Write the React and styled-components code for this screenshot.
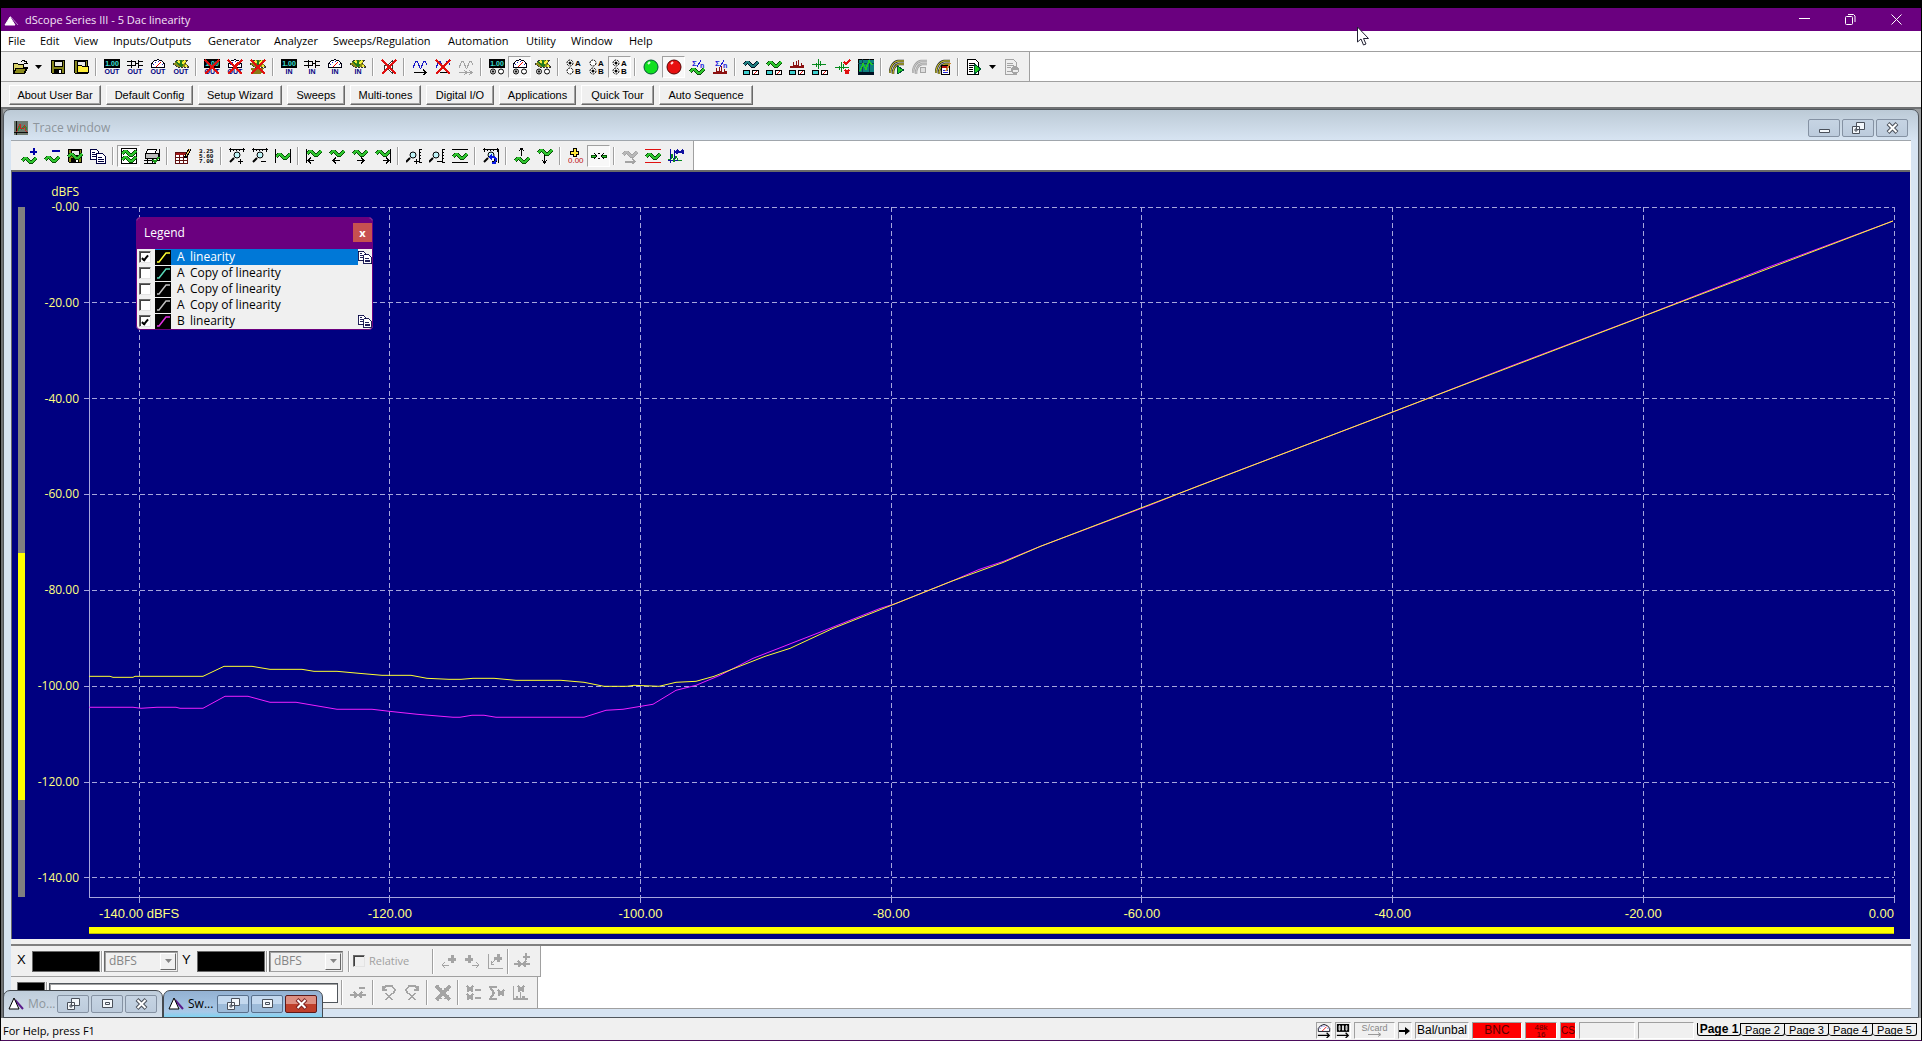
import React from "react";
import styled, { createGlobalStyle, css } from "styled-components";

const ui = '"Open Sans", "Noto Sans", sans-serif';
const sans = '"Liberation Sans", Arial, sans-serif';
const face = "#f0f0f0";
const purple = "#6a007f";

const Global = createGlobalStyle`
  *, *::before, *::after { box-sizing: border-box; }
  body { margin: 0; background: #000; font: 11px/16px ${ui}; color: #000; }
  button, input, select { font: inherit; color: inherit; margin: 0; padding: 0; border-radius: 0; }
  h1, h2 { margin: 0; font: inherit; }
  svg { display: block; flex: none; }
`;

/* ---------- Frame ---------- */
const Frame = styled.div`
  position: relative;
  display: flex;
  flex-direction: column;
  min-height: 100vh;
  border: solid #000;
  border-width: 8px 1px 0;
  border-bottom: 1px solid #4b0c5c;
  background: ${face};
`;
const TitleBar = styled.header`
  display: flex;
  align-items: center;
  height: 23px;
  padding: 0 2px;
  background: ${purple};
  color: #f4e4f6;
`;
const AppTitle = styled.h1`
  flex: 1;
  padding-left: 6px;
  font-size: 11px;
  line-height: 22px;
`;
const CaptionButton = styled.button`
  display: grid;
  place-items: center;
  width: 46px;
  height: 22px;
  border: 0;
  background: transparent;
  color: #fff;
`;
const MenuBar = styled.nav`
  display: flex;
  gap: 14px;
  height: 20px;
  padding-left: 7px;
  background: #fff;
  line-height: 20px;
`;
const MenuItem = styled.button`
  width: ${(p) => p.$w}px;
  border: 0;
  background: none;
  text-align: left;
  white-space: nowrap;
`;

/* ---------- Toolbars ---------- */
const ToolRow = styled.div`
  display: flex;
  background: #fff;
  border-top: ${(p) => (p.$ruled ? "1px solid #a0a0a0" : "0")};
`;
const Tools = styled.div`
  display: flex;
  align-items: center;
  height: 29px;
  padding: 0 6px 0 ${(p) => p.$start || 7}px;
  background: ${face};
  border-right: 1px solid #a0a0a0;
`;
const Tool = styled.button`
  display: grid;
  place-items: center;
  width: 23px;
  height: 22px;
  border: 1px solid transparent;
  background: none;
  ${(p) =>
    p.$pressed &&
    css`
      border-color: #a0a0a0 #fff #fff #a0a0a0;
      background: #f8f8f8;
    `}
`;
const Drop = styled.button`
  display: grid;
  place-items: center;
  width: 15px;
  height: 22px;
  border: 0;
  background: none;
`;
const Sep = styled.span`
  flex: none;
  width: 2px;
  height: ${(p) => p.$h || 18}px;
  margin: 0 ${(p) => p.$m || 3}px;
  border-left: 1px solid #a0a0a0;
  background: #fff;
`;
const UserBar = styled.div`
  display: flex;
  align-items: center;
  gap: 5px;
  height: 26px;
  padding: 1px 0 0 8px;
  border-top: 1px solid #a0a0a0;
  font-family: ${sans};
`;
const UserButton = styled.button`
  width: ${(p) => p.$w}px;
  height: 20px;
  border: 1px solid;
  border-color: #fff #696969 #696969 #fff;
  box-shadow: inset -1px -1px #a0a0a0;
  background: ${face};
  white-space: nowrap;
`;

/* ---------- Document windows ---------- */
const Workspace = styled.main`
  position: relative;
  flex: 1;
  display: flex;
  padding: 0 2px 0 0;
  border: solid #707274;
  border-width: 2px 0 0 2px;
  background: #9a9d9f;
`;
const DocWindow = styled.section`
  flex: 1;
  display: flex;
  flex-direction: column;
  min-width: 0;
  padding: 0 7px 8px;
  border: 1px solid #50565c;
  border-radius: 7px 7px 0 0;
  background: linear-gradient(#bccad6, #d7e4f2 30px);
`;
const DocTitle = styled.div`
  display: flex;
  align-items: center;
  gap: 2px;
  height: 30px;
  padding: 6px 3px 0 3px;
  color: #8d959c;
`;
const DocName = styled.h2`
  flex: 1;
  padding-left: 3px;
  font-size: 12px;
`;
const GlassButton = styled.button`
  display: grid;
  place-items: center;
  width: 32px;
  height: 18px;
  border: 1px solid #8592a3;
  border-radius: 2px;
  background: linear-gradient(#c6d4e3, #bccbdc);
  color: #454b55;
  ${(p) =>
    p.$active &&
    css`
      border-color: #58708c;
      background: linear-gradient(#c3d8ee 50%, #9dbbd9 50%);
    `}
  ${(p) =>
    p.$danger &&
    css`
      border-color: #5c1a1a;
      background: linear-gradient(#dd8f82 50%, #bf3f2b 50%);
    `}
`;
const Pane = styled.div`
  flex: 1;
  display: flex;
  flex-direction: column;
  border-top: 1px solid #a0a6ac;
  background: ${face};
`;

/* ---------- Plot ---------- */
const Canvas = styled.div`
  position: relative;
  flex: 1;
  display: grid;
  grid-template-columns: 18px 59px 1fr 16px;
  grid-template-rows: 35px 1fr 42px;
  min-height: 300px;
  margin-right: 1px;
  border: solid #696969;
  border-width: 2px 0 0 1px;
  background: #000080;
  color: #ffff80;
`;
const Unit = styled.div`
  grid-area: 1 / 2;
  align-self: end;
  padding: 0 10px 7px 0;
  text-align: right;
  font-size: 12px;
`;
const RangeY = styled.div`
  grid-area: 2 / 1;
  display: flex;
  flex-direction: column;
  width: 7px;
  margin-left: 6px;
  background: #808080;
`;
const RangeSpace = styled.span`
  flex: ${(p) => p.$part};
`;
const RangeThumb = styled.span`
  flex: ${(p) => p.$part};
  background: #ff0;
`;
const YTicks = styled.div`
  grid-area: 2 / 2;
  display: flex;
  flex-direction: column;
  justify-content: space-between;
  height: calc(100% * 140 / 144);
  padding-right: 10px;
  font-size: 12px;
`;
const YTick = styled.span`
  display: flex;
  align-items: center;
  justify-content: flex-end;
  height: 0;
`;
const Plot = styled.svg`
  grid-area: 2 / 3;
  width: 100%;
  height: 100%;
  overflow: visible;
`;
const XAxis = styled.div`
  grid-area: 3 / 3;
  display: flex;
  flex-direction: column;
  gap: 5px;
  padding-top: 9px;
`;
const XTicks = styled.div`
  display: flex;
  justify-content: space-between;
  padding-left: calc(100% * 4 / 144);
  font: 13px/16px ${sans};
`;
const XTick = styled.span`
  display: flex;
  justify-content: ${(p) => (p.$last ? "flex-end" : "center")};
  width: 0;
  white-space: nowrap;
`;
const RangeX = styled.div`
  height: 7px;
  background: #ff0;
  border-bottom: 1px solid #c0c000;
`;

/* ---------- Legend ---------- */
const Legend = styled.section`
  position: absolute;
  top: 45px;
  left: 124px;
  width: 237px;
  border: 1px solid ${purple};
  border-radius: 4px;
  background: ${face};
  color: #000;
  overflow: hidden;
`;
const LegendTitle = styled.div`
  display: flex;
  align-items: center;
  justify-content: space-between;
  height: 31px;
  padding: 0 0 2px 7px;
  background: ${purple};
  color: #fff;
  font-size: 12px;
`;
const LegendClose = styled.button`
  width: 19px;
  height: 19px;
  border: 0;
  background: #c75050;
  color: #fff;
  font: bold 11px/14px ${ui};
`;
const LegendRow = styled.label`
  display: flex;
  align-items: center;
  height: 16px;
  padding-left: 2px;
`;
const Box = styled.input`
  appearance: none;
  flex: none;
  display: grid;
  place-items: center;
  width: 12px;
  height: 12px;
  margin-right: 4px;
  border: 1px solid;
  border-color: #696969 #e3e3e3 #e3e3e3 #696969;
  box-shadow: inset 1px 1px #404040;
  background: ${(p) => (p.disabled ? face : "#fff")};
  &:checked::after {
    content: "";
    width: 4px;
    height: 7px;
    border: solid #000;
    border-width: 0 2px 2px 0;
    transform: rotate(40deg);
  }
`;
const LegendName = styled.span`
  flex: 1;
  display: flex;
  align-items: center;
  height: 16px;
  background: ${(p) => (p.$selected ? "#0078d7" : "none")};
  color: ${(p) => (p.$selected ? "#fff" : "#000")};
  font-size: 12px;
  white-space: nowrap;
`;
const Channel = styled.span`
  width: 13px;
  margin-left: 6px;
`;

/* ---------- Cursor bars ---------- */
const CursorBars = styled.div`
  margin-top: 5px;
  border-top: 2px solid #808080;
  border-bottom: 1px solid #a0a0a0;
  background: #fff;
`;
const CursorBar = styled.div`
  display: flex;
  align-items: center;
  width: ${(p) => p.$w}px;
  height: 31px;
  padding-left: 6px;
  border: solid #a0a0a0;
  border-width: 0 1px ${(p) => (p.$ruled ? 1 : 0)}px 0;
  background: ${face};
`;
const AxisName = styled.label`
  width: 15px;
  padding-bottom: 2px;
  font: 13px/16px ${sans};
`;
const Readout = styled.output`
  width: ${(p) => p.$w}px;
  height: 21px;
  border: 1px solid #696969;
  background: #000;
`;
const Combo = styled.span`
  display: flex;
  align-items: center;
  width: 74px;
  height: 21px;
  margin-right: ${(p) => p.$after}px;
  padding: 1px;
  border: 1px solid;
  border-color: #696969 #a0a0a0 #a0a0a0 #696969;
  box-shadow: inset 1px 1px #a0a0a0;
  color: #858585;
`;
const ComboSelect = styled.select`
  appearance: none;
  flex: 1;
  min-width: 0;
  padding-left: 3px;
  border: 0;
  background: none;
  opacity: 1;
  font-size: 12px;
`;
const ComboArrow = styled.span`
  display: grid;
  place-items: center;
  width: 16px;
  height: 17px;
  border: 1px solid;
  border-color: #fff #696969 #696969 #fff;
  background: ${face};
`;
const Relative = styled.label`
  display: flex;
  align-items: center;
  width: 76px;
  color: #a0a0a0;
  font-size: 11px;
`;
const Expression = styled.input`
  width: 289px;
  height: 20px;
  border: 1px solid #50565c;
  box-shadow: inset 1px 1px #a0a0a0;
  background: #fff;
`;

/* ---------- Minimised windows ---------- */
const Dock = styled.div`
  position: absolute;
  left: 0;
  bottom: 0;
  display: flex;
`;
const MinWindow = styled.div`
  display: flex;
  align-items: center;
  gap: 2px;
  width: 160px;
  height: 28px;
  padding: 0 5px 0 4px;
  border: 1px solid #454a50;
  border-radius: 7px 7px 0 0;
  background: ${(p) => (p.$active ? "linear-gradient(#93b1d2, #a9c9e8 80%, #7fd3f2)" : "linear-gradient(#bfcddb, #d3deea)")};
  color: ${(p) => (p.$active ? "#000" : "#8d959c")};
`;
const MinName = styled.span`
  flex: 1;
  padding-left: 2px;
  font-size: 12px;
`;

/* ---------- Status bar ---------- */
const StatusBar = styled.footer`
  display: flex;
  align-items: center;
  gap: 3px;
  height: 22px;
  padding: 3px 4px 0 2px;
  background: ${face};
  font-family: ${sans};
`;
const Help = styled.span`
  flex: 1;
  font: 11px/16px ${ui};
`;
const Cell = styled.span`
  display: grid;
  place-items: center;
  align-content: center;
  width: ${(p) => p.$w}px;
  height: 17px;
  border: 1px solid;
  border-color: #a0a0a0 #fff #fff #a0a0a0;
  background: ${(p) => (p.$alert ? "#f00" : face)};
  color: ${(p) => (p.$dim ? "#858585" : p.$alert ? "#5a0000" : "#000")};
  font-size: ${(p) => p.$size || 12}px;
  line-height: ${(p) => (p.$size ? p.$size - 1 : 15)}px;
  text-align: center;
  white-space: ${(p) => (p.$stack ? "pre" : "nowrap")};
`;
const Pages = styled.div`
  display: flex;
  align-items: flex-start;
  height: 15px;
`;
const Page = styled.button`
  width: 44px;
  height: 13px;
  border: solid #000;
  border-width: ${(p) => (p.$on ? "0 1px 1px 1px" : "1px 1px 1px 0")};
  border-radius: 0 0 3px 3px;
  background: ${face};
  font: ${(p) => (p.$on ? "bold 12px/11px" : "11px/10px")} ${sans};
  white-space: nowrap;
`;

/* ---------- Icon parts ---------- */
const G = "#2fc42f";
const Wave = ({ y = 8, c = G, o = "#064d06" }) => {
  const d = `M1 ${y + 3}L4 ${y}H5L9 ${y + 4}H11L15 ${y}`;
  return (
    <g fill="none">
      <path d={d} stroke={o} strokeWidth="3" />
      <path d={d} stroke={c} strokeWidth="1.5" />
    </g>
  );
};
const Line = ({ d, c = "#000", w = 1, f = "none" }) => <path d={d} stroke={c} strokeWidth={w} fill={f} />;
const Tag = ({ t, c = "#000080", y = 15 }) => (
  <text x="8" y={y} fontSize="7" fontWeight="bold" fontFamily="Liberation Sans, sans-serif" textAnchor="middle" fill={c}>{t}</text>
);
const Lcd = () => (
  <g>
    <path d="M0 0h16v9H0z" />
    <text x="8" y="7" fontSize="7" fontWeight="bold" fontFamily="Liberation Sans, sans-serif" textAnchor="middle" fill="#3fe0d8">1.00</text>
  </g>
);
const Plug = () => <Line d="M0 2.500h4M0 6.500h4M4.500 .5v8M4.500 2.500h4v4h-4M11.500 .5v8M9 4.500h2M12 2.500h4M12 6.500h4" />;
const Meter = () => (
  <g>
    <path d="M1.500 8.500V5L4 2L8 .5L12 2L14.500 5v3.500z" fill="#fff" stroke="#001" />
    <Line d="M3 5h1M5 3h1M8 2v1M12 5h1" c="#22c" />
    <Line d="M6 8l5-5" c="#e00" />
  </g>
);
const Fish = () => (
  <g>
    <path d="M0 5l4-4h11l-3 3 4 4H4z" fill="#8a8a18" stroke="#333" strokeDasharray="2 1" />
    <Line d="M3 3l4 3M8 1v7M11 1l-2 6" c="#1d7a1d" w={1.5} />
    <Line d="M5 2l2 2M12 2l-3 3M12 7h2" c="#f6f03a" w={1.5} />
  </g>
);
const Cross = ({ c = "#e01010" }) => <Line d="M1 1l14 14M15 1L1 15" c={c} w={2} />;
const Radios = ({ on = 1 }) => (
  <g fill="#fff" stroke="#000" shapeRendering="auto">
    <circle cx="4" cy="12.500" r="2.500" />
    <circle cx="12" cy="12.500" r="2.500" />
    <circle cx={on ? 4 : 12} cy="12.500" r=".8" fill="#000" />
  </g>
);
const AB = ({ a, b }) => (
  <g shapeRendering="auto">
    <circle cx="4" cy="4" r="3" fill="#fff" stroke="#000" strokeDasharray="2 1" />
    <circle cx="4" cy="12" r="3" fill="#fff" stroke="#000" strokeDasharray="2 1" />
    {a && <circle cx="4" cy="4" r="1.500" />}
    {b && <circle cx="4" cy="12" r="1.500" />}
    <g fontSize="8" fontWeight="bold" fontFamily="Liberation Sans, sans-serif">
      <text x="9" y="7">A</text>
      <text x="9" y="15">B</text>
    </g>
  </g>
);
const Pads = () => (
  <g>
    <path d="M.5 11.500h6v4h-6z" fill="#3fd0d0" stroke="#000" />
    <path d="M9.500 11.500h6v4h-6z" fill="#fff" stroke="#000" />
    <Line d="M11 15l3-3" c="#e01010" />
  </g>
);
const Bars = ({ y = 9 }) => <path d={`M1 ${y}h14V${y - 3}h-2V${y - 5}h-1v3h-2V${y - 8}H9v5H8V${y - 7}H7v4H5V${y - 6}H4v4H1z`} fill="#8b1010" />;
const Spike = ({ y = 6 }) => <Line d={`M0 ${y}.500h4v-2v4v-2h2V${y - 5}V${y + 5}v-5h2v-3v5v-2h6`} c="#078a1e" />;
const SigmaN = () => (
  <g fontFamily="Liberation Sans, sans-serif" fill="#1616d8" fontWeight="bold">
    <text x="3" y="7" fontSize="8">Σ</text>
    <text x="11" y="9" fontSize="7">n</text>
    <path d="M8 8l4-7" stroke="#1616d8" />
  </g>
);
const Floppy = ({ fill = "#84841c" }) => (
  <g>
    <path d="M1.500 1.500h13v13h-12l-1-1z" fill={fill} stroke="#000" />
    <path d="M4 2h8v5H4z" fill="#e9e9e9" stroke="#000" />
    <path d="M4 10h8v5H4z" />
    <path d="M9 11h2v3H9z" fill="#fff" />
  </g>
);
const Lens = ({ x = 0, s = "+" }) => (
  <g shapeRendering="auto">
    <circle cx={8 + x} cy="7" r="3" fill="#bff4f8" stroke="#000" />
    <Line d={`M${5 + x} 10l-4 4`} w={2} />
    <Line d={`M${9 + x} 13.500h5${s === "+" ? `M${11 + x}.500 11v5` : ""}`} />
  </g>
);
const RulerTop = () => <Line d="M0 1.500h16M1.500 0v4M4.500 1v2M7.500 1v2M10.500 1v2M14.500 0v4" />;
const RulerSide = () => <Line d="M13.500 1v14M13 1.500h3M13 4.500h2M13 7.500h2M13 10.500h2M13 14.500h3" />;
const Sheets = () => (
  <g fill="#fff" stroke="#000040">
    <path d="M.5 1.500h6l2 2v8h-8z" />
    <path d="M6.500 5.500h6l3 3v7h-9z" />
    <path d="M2 4.500h3M2 6.500h4M2 8.500h4M8 9.500h4M8 11.500h6M8 13.500h6" />
  </g>
);
const Curve = ({ c = "#e6de20", o = "#333" }) => (
  <g fill="none" shapeRendering="auto">
    <path d="M1 14c0-6 3-11 8-12h6M4 15c0-5 2-9 6-10h5" stroke={o} strokeWidth="2.500" />
    <path d="M1 14c0-6 3-11 8-12h6M4 15c0-5 2-9 6-10h5" stroke={c} />
  </g>
);
const grey = "#a4a4a4";
const Puff = ({ x, y }) => <Line d={`M${x - 4} ${y}h8M${x} ${y - 4}v8`} c={grey} w={3} />;
const Stars = ({ x, y }) => <Line d={`M${x - 3} ${y - 3}l6 6M${x + 3} ${y - 3}l-6 6M${x - 3} ${y}h6`} c={grey} w={1.5} />;

const icons = {
  open: <g><path d="M1.500 14.500v-10h4l1 1h5v3h4l-3 6z" fill="#d8d068" stroke="#000" /><path d="M4 9h11l-3 5H2z" fill="#8a8a1c" stroke="#000" /><Line d="M9 2.500l2-1 3 1v2M12 4.500h4" /></g>,
  save: <Floppy />,
  saveAs: <g><Floppy /><path d="M4.500 13.500v-7h4l1 1h6v6z" fill="#ffee3a" stroke="#000" /></g>,
  lcdOut: <g><Lcd /><Tag t="OUT" /></g>,
  plugOut: <g><Plug /><Tag t="OUT" /></g>,
  meterOut: <g><Meter /><Tag t="OUT" /></g>,
  fishOut: <g><Fish /><Tag t="OUT" /></g>,
  lcdOff: <g><Lcd /><Tag t="OUT" /><Cross /></g>,
  meterOff: <g><Meter /><Tag t="OUT" /><Cross /></g>,
  fishOff: <g><Fish /><path d="M1 9h13l-3 6H3z" fill="#8a7a18" /><Cross /></g>,
  lcdIn: <g><Lcd /><Tag t="IN" /></g>,
  plugIn: <g><Plug /><Tag t="IN" /></g>,
  meterIn: <g><Meter /><Tag t="IN" /></g>,
  fishIn: <g><Fish /><Tag t="IN" /></g>,
  mute: <g><path d="M3 6h4l4-4v12l-4-4H3z" fill="#fff" stroke="#333" /><Cross /></g>,
  gen: <g><Line d="M1 9l2-5 1-2h1l1 2 2 5h1l2-5 1-2h1l2 4" c="#1616c8" /><Line d="M2 13.500h12M11 11l3 2.500-3 2.500" w={1.5} /></g>,
  genOff: <g><Line d="M1 9l2-5 1-2h1l1 2 2 5h1l2-5 1-2h1l2 4" c="#1616c8" /><Line d="M5 13.500h8" /><Cross /></g>,
  genGrey: <g><Line d="M1 9l2-5 1-2h1l1 2 2 5h1l2-5 1-2h1l2 4" c={grey} /><Line d="M1 13.500h13M6 11l3 2.500-3 2.500M11 11l3 2.500-3 2.500" c={grey} /></g>,
  lcdSel: <g><Lcd /><Radios /></g>,
  meterSel: <g><Meter /><Radios /></g>,
  fishSel: <g><Fish /><Radios /></g>,
  chA: <AB a />, chB: <AB b />, chAB: <AB a b />,
  go: <g shapeRendering="auto"><circle cx="8" cy="8" r="7" fill="#10e020" stroke="#053" /><path d="M5 5l2-2" stroke="#dfd" strokeWidth="2" /></g>,
  stop: <g shapeRendering="auto"><circle cx="8" cy="8" r="7" fill="#e81010" stroke="#500" /><path d="M5 5l2-2" stroke="#fdd" strokeWidth="2" /></g>,
  sigWave: <g><SigmaN /><Wave y={10} /></g>,
  sigFft: <g><SigmaN /><Bars y={15} /></g>,
  scopeA: <g><Wave y={3} c="#1f7d80" o="#012" /><Pads /></g>,
  scopeB: <g><Wave y={3} /><Pads /></g>,
  fft: <g><Bars /><Pads /></g>,
  impulse: <g><Spike y={5} /><Pads /></g>,
  limits: <g><Spike y={8} /><Line d="M9 3l2 2 4-4M10 11l4 4M14 11l-4 4" c="#e01010" w={1.5} /></g>,
  trace: <g><path d="M0 0h16v16H0z" fill="#0e8080" stroke="#000" /><Line d="M0 4.500h16M4.500 0v16M11.500 0v16" c="#145" /><Line d="M2 12l3-7 3 5 3-8 3 4" c="#2c2" w={1.5} /><path d="M0 13h16v3H0z" fill="#012" /></g>,
  traceDoc: <g><path d="M0 0h16v16H0z" fill="#6f7a70" /><Line d="M2.500 0v16M0 13.500h16" /><Line d="M4 12l2-5 3 2 3-3 3 4" c="#1c9a3c" w={2} /><Line d="M3 12l3-7 1-2 1 6h3l1-4 2 7" c="#d02020" /></g>,
  sweep: <g><Curve /><path d="M8 7l7 4-7 4z" fill="#2c2" stroke="#053" /></g>,
  sweepGrey: <g><Curve c="#ccc" o={grey} /><circle cx="11" cy="11" r="3" fill="#ddd" stroke={grey} /></g>,
  sweepSet: <g><Curve /><path d="M6.500 6.500h8v9h-8z" fill="#fff" stroke="#000" /><path d="M7 7h7v2H7z" fill="#b31010" /><Line d="M8 11h5M8 13h5" c="#22c" /><Line d="M15 4l-4 8" c="#c83" w={2} /></g>,
  script: <g><path d="M1.500 .5h8l3 3v12h-11z" fill="#fff" stroke="#000" /><Line d="M3 4.500h6M3 6.500h7M3 8.500h4M3 10.500h4M3 12.500h4" /><path d="M8 5l7 5-7 5z" fill="#2c2" stroke="#053" /></g>,
  scriptGrey: <g><path d="M1.500 .5h8l3 3v12h-11z" fill="#eee" stroke={grey} /><Line d="M3 4.500h6M3 6.500h7M3 8.500h4M3 12.500h4" c={grey} /><circle cx="11" cy="11" r="4" fill={grey} /><Line d="M9 11.500h5" c="#eee" w={2} /></g>,
  add: <g><Wave y={10} /><Line d="M12.500 0v7M9 3.500h7" c="#0000a8" w={2} /></g>,
  sub: <g><Wave y={9} /><Line d="M8 3h8" c="#0000a8" w={2} /></g>,
  store: <g><Floppy /><Wave y={6} /></g>,
  sheets: <Sheets />,
  multi: <g><path d="M.5 .5h15v15H.5z" fill="#fff" stroke="#000" /><Wave y={3} /><Wave y={9} /></g>,
  print: <g><path d="M4 1h9l-2 4H2z" fill="#fff" stroke="#000" /><path d="M1 5h13v5H1z" fill="#bbb" stroke="#000" /><Line d="M0 12.500h16M0 15.500h12M3.500 11v5M8.500 11v5M15.500 1v11" /><Line d="M9 12l2 2 4-5" c="#1a9a1a" w={2} /></g>,
  table: <g><path d="M.5 4.500h12v11H.5z" fill="#fff" stroke="#601010" /><path d="M1 5h11v2H1z" fill="#a01818" /><Line d="M1 9.500h11M1 12.500h11M4.500 7v8M8.500 7v8" c="#601010" /><Line d="M15 1l-5 9" c="#000" w={3} /><Line d="M15 1l-4 7" c="#f0c060" /></g>,
  values: <g fontSize="6" fontFamily="Liberation Mono, monospace" fontWeight="bold"><text x="1" y="5">3.25</text><text x="1" y="10">5.60</text><text x="1" y="15">7.00</text></g>,
  zoomX: <g><RulerTop /><Lens /></g>,
  unzoomX: <g><RulerTop /><Lens s="-" /></g>,
  fitX: <g><Wave y={6} /><Line d="M.5 1v14M15.500 1v14" /></g>,
  first: <g><Wave y={3} /><Line d="M.5 1v14M2 12.500h6M5 9.500l-3 3 3 3" /></g>,
  prev: <g><Wave y={3} /><Line d="M4 12.500h7M7 9.500l-3 3 3 3" /></g>,
  next: <g><Wave y={3} /><Line d="M5 12.500h7M9 9.500l3 3-3 3" /></g>,
  last: <g><Wave y={3} /><Line d="M15.500 1v14M8 12.500h6M11 9.500l3 3-3 3" /></g>,
  zoomY: <g><Lens x={-1} /><RulerSide /></g>,
  unzoomY: <g><Lens x={-1} s="-" /><RulerSide /></g>,
  fitY: <g><Wave y={6} /><Line d="M0 1.500h16M0 14.500h16" /></g>,
  unzoom: <g><RulerTop /><Lens /><Line d="M15.500 1v14" /><Line d="M7 9h4l2 2-1 4H9" c="#0a1ae0" w={2} /><path d="M5 9l4-3v6z" fill="#0a1ae0" /></g>,
  up: <g><Wave y={10} /><Line d="M7.500 0v8M5 3l2.500-3L10 3" /></g>,
  down: <g><Wave y={2} /><Line d="M7.500 7v8M5 12l2.500 3 2.500-3" /></g>,
  cursor: <g><Line d="M6.500 0v9M2 4.500h9" w={4} /><Line d="M6.500 1v7M3 4.500h7" c="#ffe83a" w={2} /><text x="0" y="15" fontSize="8" fontFamily="Liberation Sans, sans-serif" fill="#c01010">0.00</text></g>,
  lock: <g><Line d="M0 8h5M11 8h5" c="#064d06" w={3} /><Line d="M1 8h4M11 8h4" c={G} /><Line d="M3 5l3 3-3 3M13 5l-3 3 3 3M7 5l2 1M7 11l2-1" /></g>,
  greyWave: <g><Wave y={4} c="#b8b8b8" o={grey} /><Line d="M3 13.500h10M10 10.500l3 3-3 3" c={grey} w={2} /></g>,
  bounds: <g><Wave y={6} /><Line d="M0 1.500h16M0 14.500h16" c="#e01010" w={1.5} /></g>,
  marks: <g><Line d="M2.500 1v14M0 12.500h12M6.500 2v10" c="#1010a0" /><Line d="M0 11h3l1-5 2 8 2-6 2 4h4" c="#078a1e" /><Line d="M8 4h8M10 2L8 4l2 2M14 2l2 2-2 2" c="#1010a0" w={1.5} /></g>,
  gLeft: <g><Puff x={11} y={6} /><Line d="M1 12h7M4 9l-3 3 3 3" c={grey} /></g>,
  gRight: <g><Puff x={5} y={6} /><Line d="M8 12h7M12 9l3 3-3 3" c={grey} /></g>,
  gAxis: <g><Line d="M1.500 1v14h14M8 7l-4 4M4 8v3h3" c={grey} /><Puff x={11} y={5} /></g>,
  gAdd: <g><Line d="M0 11h6M10 11h6M4 8l3 3-3 3M12 8l-3 3 3 3" c={grey} w={2} /><Line d="M12 0v7M9 3.500h7" c={grey} w={2} /></g>,
  gSub: <g><Line d="M0 10h6M10 10h6M4 7l3 3-3 3M12 7l-3 3 3 3" c={grey} w={2} /><Line d="M9 2.500h6" c={grey} w={2} /></g>,
  gUndo: <g><Line d="M2 1v4h4M2 4l3-3h6l3 4-2 4" c={grey} w={1.5} /><Line d="M5 8l6 7M11 8l-6 7" c={grey} w={1.5} /></g>,
  gRedo: <g><Line d="M14 1v4h-4M14 4l-3-3H5L2 5l2 4" c={grey} w={1.5} /><Line d="M5 8l6 7M11 8l-6 7" c={grey} w={1.5} /></g>,
  gClear: <g><Line d="M1 3h6M9 3h6M1 13h6M9 13h6M3 0v6M13 0v6M3 10v6M13 10v6" c={grey} /><Line d="M1 1l14 14M15 1L1 15" c={grey} w={3} /></g>,
  gList: <g><Stars x={4} y={4} /><Stars x={4} y={12} /><Line d="M9 4.500h6M9 12.500h6" c={grey} w={2} /></g>,
  gSum: <g><Line d="M8 2H1l4 6-4 6h7" c={grey} w={2} /><Stars x={12} y={8} /></g>,
  gPeak: <g><Line d="M1.500 1v13h14M4 12h2M10 12h3M8.500 7v7" c={grey} w={1.5} /><Stars x={9} y={4} /></g>,
};

const Icon = ({ name, size = 16 }) => (
  <svg width={size} height={size} viewBox="0 0 16 16" shapeRendering="crispEdges" aria-hidden="true">
    {icons[name]}
  </svg>
);
const Caret = ({ c = "#000" }) => (
  <svg width="7" height="4" viewBox="0 0 7 4" aria-hidden="true"><path d="M0 0h7L3.500 4z" fill={c} /></svg>
);
const Logo = ({ dark }) => (
  <svg width="16" height="14" viewBox="0 0 16 14" aria-hidden="true">
    <path d="M7 3L15 12" stroke={dark ? "#5b1c8c" : "#b57fc8"} strokeWidth={dark ? 2 : 1} />
    <path d={dark ? "M1 12L6 1l5 11z" : "M2 12L7 4l5 8z"} fill="#fff" stroke={dark ? "#000" : "#fff"} />
  </svg>
);
const Glyph = ({ kind, light }) => {
  const c = light ? "#fff" : "#4a505a";
  return (
    <svg width="13" height="12" viewBox="0 0 13 12" aria-hidden="true" fill="#f4f8fc" stroke={light ? "#fff" : c}>
      {kind === "min" && <path d="M1.500 7.500h10v3h-10z" />}
      {kind === "max" && <path d="M1.500 1.500h10v8h-10zM4.500 4.500h4v2h-4z" />}
      {kind === "restore" && <path d="M4.500 .5h8v7h-8zM.5 4.500h7v7h-7zM3 7h2v2H3z" />}
      {kind === "close" && (
        <g fill="none">
          <path d="M2 1.500l9 9M11 1.500l-9 9" stroke={light ? "#7c2020" : c} strokeWidth="4" />
          <path d="M2.500 2l8 8M10.500 2l-8 8" stroke="#fff" strokeWidth="2" />
        </g>
      )}
    </svg>
  );
};

/* "|" is a separator, "v" a drop arrow, "*" marks a pressed button */
const mainTools = "open v save saveAs | lcdOut plugOut meterOut fishOut | lcdOff meterOff fishOff | lcdIn plugIn meterIn fishIn | mute | gen genOff genGrey | lcdSel *meterSel fishSel | chA chB *chAB | go *stop sigWave sigFft | scopeA scopeB fft impulse limits trace | sweep sweepGrey sweepSet | script v scriptGrey";
const traceTools = "add sub store sheets | *multi print | table values | zoomX unzoomX fitX | first prev next last | zoomY unzoomY fitY | unzoom | up down | cursor *lock | greyWave bounds marks";

const ToolSet = ({ items }) =>
  items.split(" ").map((t, i) => {
    if (t === "|") return <Sep key={i} />;
    if (t === "v") return <Drop key={i} aria-label="More"><Caret /></Drop>;
    const pressed = t[0] === "*";
    const name = pressed ? t.slice(1) : t;
    return (
      <Tool key={i} type="button" aria-label={name} aria-pressed={pressed} $pressed={pressed}>
        <Icon name={name} />
      </Tool>
    );
  });

const menus = [["File", 18], ["Edit", 20], ["View", 25], ["Inputs/Outputs", 81], ["Generator", 52], ["Analyzer", 45], ["Sweeps/Regulation", 101], ["Automation", 64], ["Utility", 31], ["Window", 44], ["Help", 26]];
const userButtons = [["About User Bar", 92], ["Default Config", 87], ["Setup Wizard", 84], ["Sweeps", 58], ["Multi-tones", 71], ["Digital I/O", 68], ["Applications", 77], ["Quick Tour", 73], ["Auto Sequence", 94]];

/* ---------- Chart data, in plot units of 1805 x 691 ---------- */
const traceA = [[0, 470], [21, 470], [24, 471], [44, 471], [46, 470], [114, 470], [135, 460], [163, 460], [181, 463], [213, 463], [225, 465], [248, 465], [270, 467], [293, 469], [322, 469], [338, 472], [360, 473], [372, 473], [384, 472], [405, 472], [427, 474], [472, 474], [495, 476], [515, 480], [538, 480], [545, 479], [570, 480], [587, 476], [607, 475], [625, 470], [676, 450], [701, 442], [744, 422], [802, 399], [862, 375], [914, 356], [951, 340], [1804, 14]];
const traceB = [[0, 501], [44, 501], [52, 502], [68, 501], [87, 501], [91, 502], [114, 502], [136, 490], [159, 490], [181, 496], [207, 496], [248, 503], [283, 503], [300, 505], [328, 508], [364, 511], [371, 511], [383, 509], [395, 509], [407, 511], [495, 511], [517, 504], [534, 503], [564, 498], [587, 484], [607, 479], [631, 469], [664, 452], [728, 427], [791, 402], [807, 397], [862, 375], [890, 363], [914, 355], [951, 340], [1060, 299], [1110, 279], [1310, 203], [1420, 160], [1560, 107], [1680, 60], [1804, 14]];
const toPath = (pts) => "M" + pts.map((p) => p.join(" ")).join("L");
const ticks = [0, 1, 2, 3, 4, 5, 6, 7];

const Chart = () => (
  <Plot shapeRendering="crispEdges" role="img" aria-label="Linearity traces">
    <g stroke="#a6a6dc" strokeDasharray="5 3">
      {ticks.map((i) => {
        const y = `${(i * 20 * 100) / 144}%`;
        const x = `${((4 + i * 20) * 100) / 144}%`;
        return (
          <g key={i}>
            <line x1="-5" x2="100%" y1={y} y2={y} />
            <line x1={x} x2={x} y1="0" y2="100%" />
            <svg x={x} y="100%" overflow="visible"><line x1="0" x2="0" y1="0" y2="6" strokeDasharray="none" /></svg>
          </g>
        );
      })}
    </g>
    <g stroke="#a6a6dc">
      <line x1="0" x2="0" y1="0" y2="100%" />
      <line x1="0" x2="100%" y1="100%" y2="100%" />
    </g>
    <svg width="100%" height="100%" viewBox="0 0 1805 691" preserveAspectRatio="none" fill="none">
      <path d={toPath(traceB)} stroke="#f020ff" vectorEffect="non-scaling-stroke" />
      <path d={toPath(traceA)} stroke="#ffff30" vectorEffect="non-scaling-stroke" />
    </svg>
  </Plot>
);

const legendRows = [
  { ch: "A", name: "linearity", c: "#ffff30", on: true, selected: true, copy: true },
  { ch: "A", name: "Copy of linearity", c: "#58d8b8" },
  { ch: "A", name: "Copy of linearity", c: "#c0c0c0" },
  { ch: "A", name: "Copy of linearity", c: "#c0c0c0" },
  { ch: "B", name: "linearity", c: "#e030e0", on: true, copy: true },
];

const LegendPanel = () => (
  <Legend aria-label="Legend">
    <LegendTitle>Legend<LegendClose aria-label="Close legend">x</LegendClose></LegendTitle>
    {legendRows.map((r, i) => (
      <LegendRow key={i}>
        <Box type="checkbox" defaultChecked={r.on} />
        <LegendName $selected={r.selected}>
          <svg width="16" height="15" viewBox="0 0 16 15" aria-hidden="true">
            <path d="M0 0h16v15H0z" />
            <path d="M2 12h2l7-9h4" stroke={r.c} fill="none" strokeWidth="1.500" />
          </svg>
          <Channel>{r.ch}</Channel>{r.name}
        </LegendName>
        {r.copy && <Icon name="sheets" size={14} />}
      </LegendRow>
    ))}
  </Legend>
);

const UnitCombo = ({ id, after }) => (
  <Combo $after={after}>
    <ComboSelect id={id} aria-label={`${id} unit`} disabled><option>dBFS</option></ComboSelect>
    <ComboArrow><Caret c="#858585" /></ComboArrow>
  </Combo>
);
const GreyTool = ({ name }) => <Tool type="button" disabled aria-label={name}><Icon name={name} /></Tool>;

const Minimised = ({ name, active }) => (
  <MinWindow $active={active}>
    <Logo dark />
    <MinName>{name}</MinName>
    <GlassButton $active={active} aria-label="Restore"><Glyph kind="restore" /></GlassButton>
    <GlassButton $active={active} aria-label="Maximise"><Glyph kind="max" /></GlassButton>
    <GlassButton $danger={active} aria-label="Close"><Glyph kind="close" light={active} /></GlassButton>
  </MinWindow>
);

const Pointer = styled.svg`
  position: absolute;
  left: 1355px;
  top: 18px;
`;

export default function App() {
  return (
    <>
      <Global />
      <Frame>
        <TitleBar>
          <Logo />
          <AppTitle>dScope Series III - 5 Dac linearity</AppTitle>
          <CaptionButton aria-label="Minimise"><svg width="11" height="11"><path d="M0 4.500h11" stroke="#fff" /></svg></CaptionButton>
          <CaptionButton aria-label="Restore">
            <svg width="11" height="11" fill="none" stroke="#fff"><rect x=".5" y="2.500" width="7" height="8" rx="1" /><path d="M3 .5h5.500l1.500 1.500V8" /></svg>
          </CaptionButton>
          <CaptionButton aria-label="Close"><svg width="11" height="11"><path d="M.5 .5l10 10M10.500 .5l-10 10" stroke="#fff" /></svg></CaptionButton>
        </TitleBar>
        <MenuBar>{menus.map(([m, w]) => <MenuItem key={m} $w={w}>{m}</MenuItem>)}</MenuBar>
        <ToolRow $ruled><Tools><ToolSet items={mainTools} /></Tools></ToolRow>
        <UserBar>{userButtons.map(([b, w]) => <UserButton key={b} $w={w}>{b}</UserButton>)}</UserBar>

        <Workspace>
          <DocWindow>
            <DocTitle>
              <Icon name="traceDoc" size={14} />
              <DocName>Trace window</DocName>
              <GlassButton aria-label="Minimise trace"><Glyph kind="min" /></GlassButton>
              <GlassButton aria-label="Restore trace"><Glyph kind="restore" /></GlassButton>
              <GlassButton aria-label="Close trace"><Glyph kind="close" /></GlassButton>
            </DocTitle>
            <Pane>
              <ToolRow><Tools $start={6}><ToolSet items={traceTools} /></Tools></ToolRow>
              <Canvas>
                <Unit>dBFS</Unit>
                <RangeY><RangeSpace $part={346} /><RangeThumb $part={248} /><RangeSpace $part={97} /></RangeY>
                <YTicks>{ticks.map((i) => <YTick key={i}>{`-${(i * 20).toFixed(2)}`}</YTick>)}</YTicks>
                <Chart />
                <XAxis>
                  <XTicks>
                    {ticks.map((i) => (
                      <XTick key={i} $last={i === 7}>
                        {i === 7 ? "0.00" : `-${(140 - i * 20).toFixed(2)}${i === 0 ? " dBFS" : ""}`}
                      </XTick>
                    ))}
                  </XTicks>
                  <RangeX />
                </XAxis>
                <LegendPanel />
              </Canvas>
              <CursorBars>
                <CursorBar $w={530} $ruled>
                  <AxisName htmlFor="X">X</AxisName>
                  <Readout $w={68} /><Sep $h={21} $m={1} />
                  <UnitCombo id="X" after={4} />
                  <AxisName htmlFor="Y">Y</AxisName>
                  <Readout $w={68} /><Sep $h={21} $m={1} />
                  <UnitCombo id="Y" after={2} /><Sep $h={21} />
                  <Relative><Box type="checkbox" disabled />Relative</Relative>
                  <Sep $h={25} />
                  <GreyTool name="gLeft" /><GreyTool name="gRight" /><GreyTool name="gAxis" />
                  <Sep $h={25} $m={1} /><GreyTool name="gAdd" />
                </CursorBar>
                <CursorBar $w={527}>
                  <Readout $w={28} aria-label="Trace colour" />
                  <Sep $h={21} $m={1} />
                  <Expression aria-label="Trace" />
                  <Sep $h={25} /><GreyTool name="gSub" />
                  <Sep $h={25} /><GreyTool name="gUndo" /><GreyTool name="gRedo" />
                  <Sep $h={25} /><GreyTool name="gClear" />
                  <Sep $h={25} /><GreyTool name="gList" /><GreyTool name="gSum" /><GreyTool name="gPeak" />
                </CursorBar>
              </CursorBars>
            </Pane>
          </DocWindow>
          <Dock><Minimised name="Mo..." /><Minimised name="Sw..." active /></Dock>
        </Workspace>

        <StatusBar>
          <Help>For Help, press F1</Help>
          <Cell $w={16}><svg width="14" height="14" viewBox="0 0 16 16"><Meter /><Line d="M1 13h13M11 10l3 3-3 3" w={1.5} /></svg></Cell>
          <Cell $w={16}><svg width="14" height="14" viewBox="0 0 16 16"><path d="M1 0h14v9H1z" /><Line d="M3.500 2h1v5h-1zM7.500 2h1v5h-1zM11.500 2h1v5h-1z" c="#fff" /><Line d="M1 13h13M11 10l3 3-3 3" w={1.5} /></svg></Cell>
          <Cell $w={41} $size={9} $dim>
            <span>S/card</span>
            <svg width="14" height="5"><path d="M0 2.500h12M10 .5l3 2-3 2" stroke="#999" fill="none" /></svg>
          </Cell>
          <Cell $w={14}><svg width="12" height="10"><path d="M0 5h9" stroke="#000" strokeWidth="2" /><path d="M6 1l5 4-5 4z" /></svg></Cell>
          <Cell $w={54}>Bal/unbal</Cell>
          <Cell $w={50} $alert>BNC</Cell>
          <Cell $w={32} $alert $size={8} $stack>{"48k\n16"}</Cell>
          <Cell $w={16} $alert $size={10}>CS</Cell>
          <Cell $w={56} /><Cell $w={56} />
          <Pages>{[1, 2, 3, 4, 5].map((n) => <Page key={n} $on={n === 1}>{`Page ${n}`}</Page>)}</Pages>
        </StatusBar>
        <Pointer width="13" height="20" viewBox="0 0 13 20" aria-hidden="true">
          <path d="M1.500 1v15l3.500-3 2.500 6 2.500-1-2.500-5.500h5z" fill="#fff" stroke="#223" />
        </Pointer>
      </Frame>
    </>
  );
}
